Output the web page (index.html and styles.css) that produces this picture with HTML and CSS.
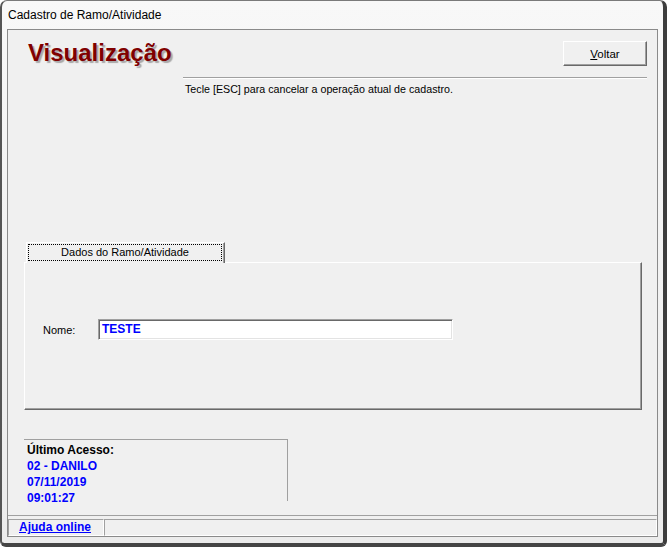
FILE: index.html
```html
<!DOCTYPE html>
<html lang="pt-BR">
<head>
    <meta charset="UTF-8">
    <title>Cadastro de Ramo/Atividade</title>
    <link rel="stylesheet" href="styles.css">
</head>
<body>
    <div class="window">
        <div class="titlebar">Cadastro de Ramo/Atividade</div>
        <div class="client">
            <div class="header">
                <div class="top-row">
                    <h1 class="page-title">Visualização</h1>
                    <button type="button" class="btn"><u>V</u>oltar</button>
                </div>
                <div class="rule"></div>
                <p class="hint">Tecle [ESC] para cancelar a operação atual de cadastro.</p>
            </div>

            <!-- aba unica -->
            <div class="tabs">
                <div class="tab"><span class="tab-label">Dados do Ramo/Atividade</span></div>
            </div>
            <div class="tab-panel">
                <div class="field">
                    <label class="field-label">Nome:</label>
                    <div class="field-input">TESTE</div>
                </div>
            </div>

            <div class="last-access">
                <div class="la-title">Último Acesso:</div>
                <div class="la-value">02 - DANILO</div>
                <div class="la-value">07/11/2019</div>
                <div class="la-value">09:01:27</div>
            </div>

            <div class="statusbar">
                <div class="status-cell first"><a href="#" class="help-link">Ajuda online</a></div>
                <div class="status-cell fill"></div>
            </div>
        </div>
    </div>
</body>
</html>
```

FILE: styles.css
```css
body { margin: 0; background: #fff; font-family: "Liberation Sans", Arial, sans-serif; color: #000; }
.window {
    width: 667px; height: 547px; box-sizing: border-box;
    border-top: 1px solid #7a7a7a; border-left: 2px solid #555; border-right: 4px solid #3d3d3d; border-bottom: 4px solid #454545;
    border-radius: 7px 7px 6px 6px;
    background: linear-gradient(#f8f8f8, #ececec);
    padding: 0 5px 6px 5px;
}
.titlebar { height: 28px; line-height: 28px; font-size: 12px; padding-left: 1px; color: #000; }
.client {
    height: 508px; box-sizing: border-box;
    border: 1px solid #8a8a8a;
    background: #f0f0f0;
    display: flex; flex-direction: column;
    font-size: 11px;
}
.header { padding: 9px 10px 0 20px; }
.top-row { height: 38px; display: flex; justify-content: space-between; align-items: flex-start; }
.page-title { margin: 0; font-size: 24px; line-height: 28px; font-weight: bold; color: #800000; text-shadow: 2px 2px 1px rgba(0,0,0,0.3); }
.btn {
    margin-top: 2px; width: 84px; height: 25px; box-sizing: border-box;
    font-family: "Liberation Sans", Arial, sans-serif; font-size: 11.5px; color: #000;
    background: #f0f0f0;
    border: 1px solid; border-color: #fff #696969 #696969 #fff;
    box-shadow: inset -1px -1px #a0a0a0;
    padding: 0;
}
.rule { margin-left: 155px; border-top: 1px solid #a0a0a0; border-bottom: 1px solid #fff; }
.hint { margin: 4px 0 0 157px; line-height: 13px; font-size: 10.7px; }
.tabs { margin-top: 146px; padding-left: 18px; display: flex; }
.tab {
    position: relative; z-index: 1;
    width: 199px; height: 21px; box-sizing: border-box; margin-bottom: -1px;
    background: #f0f0f0;
    border-top: 1px solid #fff; border-left: 1px solid #fff; border-right: 1px solid #696969;
    box-shadow: inset -1px 0 #a0a0a0;
}
.tab-label {
    display: block; margin: 1px 2px 0 1px; height: 17px; box-sizing: border-box;
    outline: 1px dotted #000; outline-offset: -1px;
    text-align: center; line-height: 16px;
}
.tab-panel {
    margin: 0 15px 0 16px; height: 148px; box-sizing: border-box;
    border: 1px solid; border-color: #fff #696969 #696969 #fff;
    box-shadow: inset -1px -1px #a0a0a0;
    padding: 56px 0 0 18px;
}
.field { display: flex; align-items: center; }
.field-label { width: 55px; }
.field-input {
    width: 355px; height: 21px; box-sizing: border-box;
    background: #fff;
    border: 1px solid; border-color: #a0a0a0 #fff #fff #a0a0a0;
    box-shadow: inset 1px 1px #696969, inset -1px -1px #e3e3e3;
    padding-left: 3px; line-height: 19px;
    font-size: 12px; font-weight: bold; color: #0000ff;
}
.last-access {
    margin: 29px 0 0 16px; width: 264px; height: 62px; box-sizing: border-box;
    border-top: 1px solid #a0a0a0; border-right: 1px solid #a0a0a0;
    padding: 2px 0 0 3px;
    font-size: 12px; font-weight: bold; line-height: 16px;
}
.la-value { color: #0000ff; }
.statusbar {
    margin-top: auto; height: 21px; box-sizing: border-box;
    border-top: 1px solid #a0a0a0; padding-top: 3px;
    display: flex;
}
.status-cell {
    height: 17px; box-sizing: border-box;
    border: 1px solid; border-color: #a0a0a0 #fff #fff #a0a0a0;
}
.status-cell.first { width: 96px; padding-left: 10px; line-height: 15px; }
.status-cell.fill { flex: 1; }
.help-link { color: #0000ff; font-weight: bold; font-size: 12px; text-decoration: underline; }
```
